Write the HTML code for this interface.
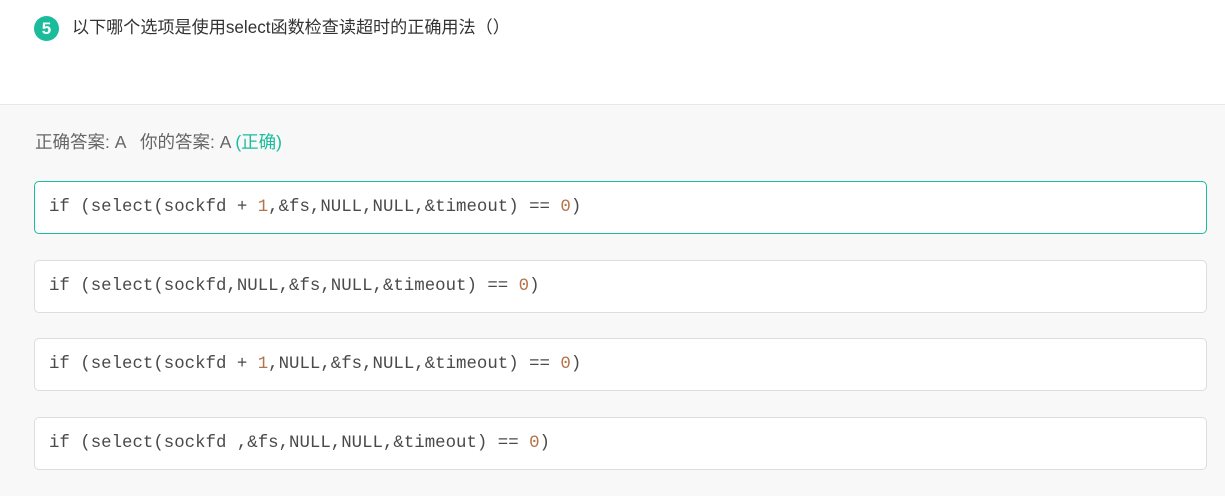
<!DOCTYPE html>
<html><head><meta charset="utf-8"><style>
body{margin:0;width:1225px;height:496px;background:#fff;font-family:"Liberation Sans","Noto Sans CJK SC",sans-serif;overflow:hidden;position:relative}
.top{height:104px;border-bottom:1px solid #e8e8e8;position:relative}
.badge{position:absolute;left:34px;top:16px;width:25px;height:25px;border-radius:50%;background:#1abc9c;color:#fff;font-size:17px;font-weight:bold;line-height:25px;text-align:center}
.q{position:absolute;left:72px;top:17px;font-size:17.1px;color:#333;line-height:22px}
.bot{position:absolute;top:105px;left:0;right:0;bottom:0;background:#f8f8f8}
.ans{position:absolute;left:35px;top:131px;font-size:17.5px;color:#666;line-height:22px}
.ans span{color:#1abc9c}
.opt{position:absolute;left:34px;width:1171px;height:51px;border:1px solid #ddd;border-radius:5px;background:#fff;box-sizing:content-box}
.opt pre{margin:0;position:absolute;left:14px;top:15px;font-family:"Liberation Mono",monospace;font-size:17.4px;line-height:22px;color:#4a4a4a}
.opt.sel{border-color:#1abc9c}
.n{color:#b5734a}
</style></head><body>
<div class="top">
<div class="badge">5</div>
<div class="q">以下哪个选项是使用select函数检查读超时的正确用法（）</div>
</div>
<div class="bot"></div>
<div class="ans">正确答案: A &nbsp;&nbsp;你的答案: A <span>(正确)</span></div>
<div class="opt sel" style="top:181px"><pre>if (select(sockfd + <span class="n">1</span>,&amp;fs,NULL,NULL,&amp;timeout) == <span class="n">0</span>)</pre></div>
<div class="opt" style="top:260px"><pre>if (select(sockfd,NULL,&amp;fs,NULL,&amp;timeout) == <span class="n">0</span>)</pre></div>
<div class="opt" style="top:338px"><pre>if (select(sockfd + <span class="n">1</span>,NULL,&amp;fs,NULL,&amp;timeout) == <span class="n">0</span>)</pre></div>
<div class="opt" style="top:417px"><pre>if (select(sockfd ,&amp;fs,NULL,NULL,&amp;timeout) == <span class="n">0</span>)</pre></div>
</body></html>
